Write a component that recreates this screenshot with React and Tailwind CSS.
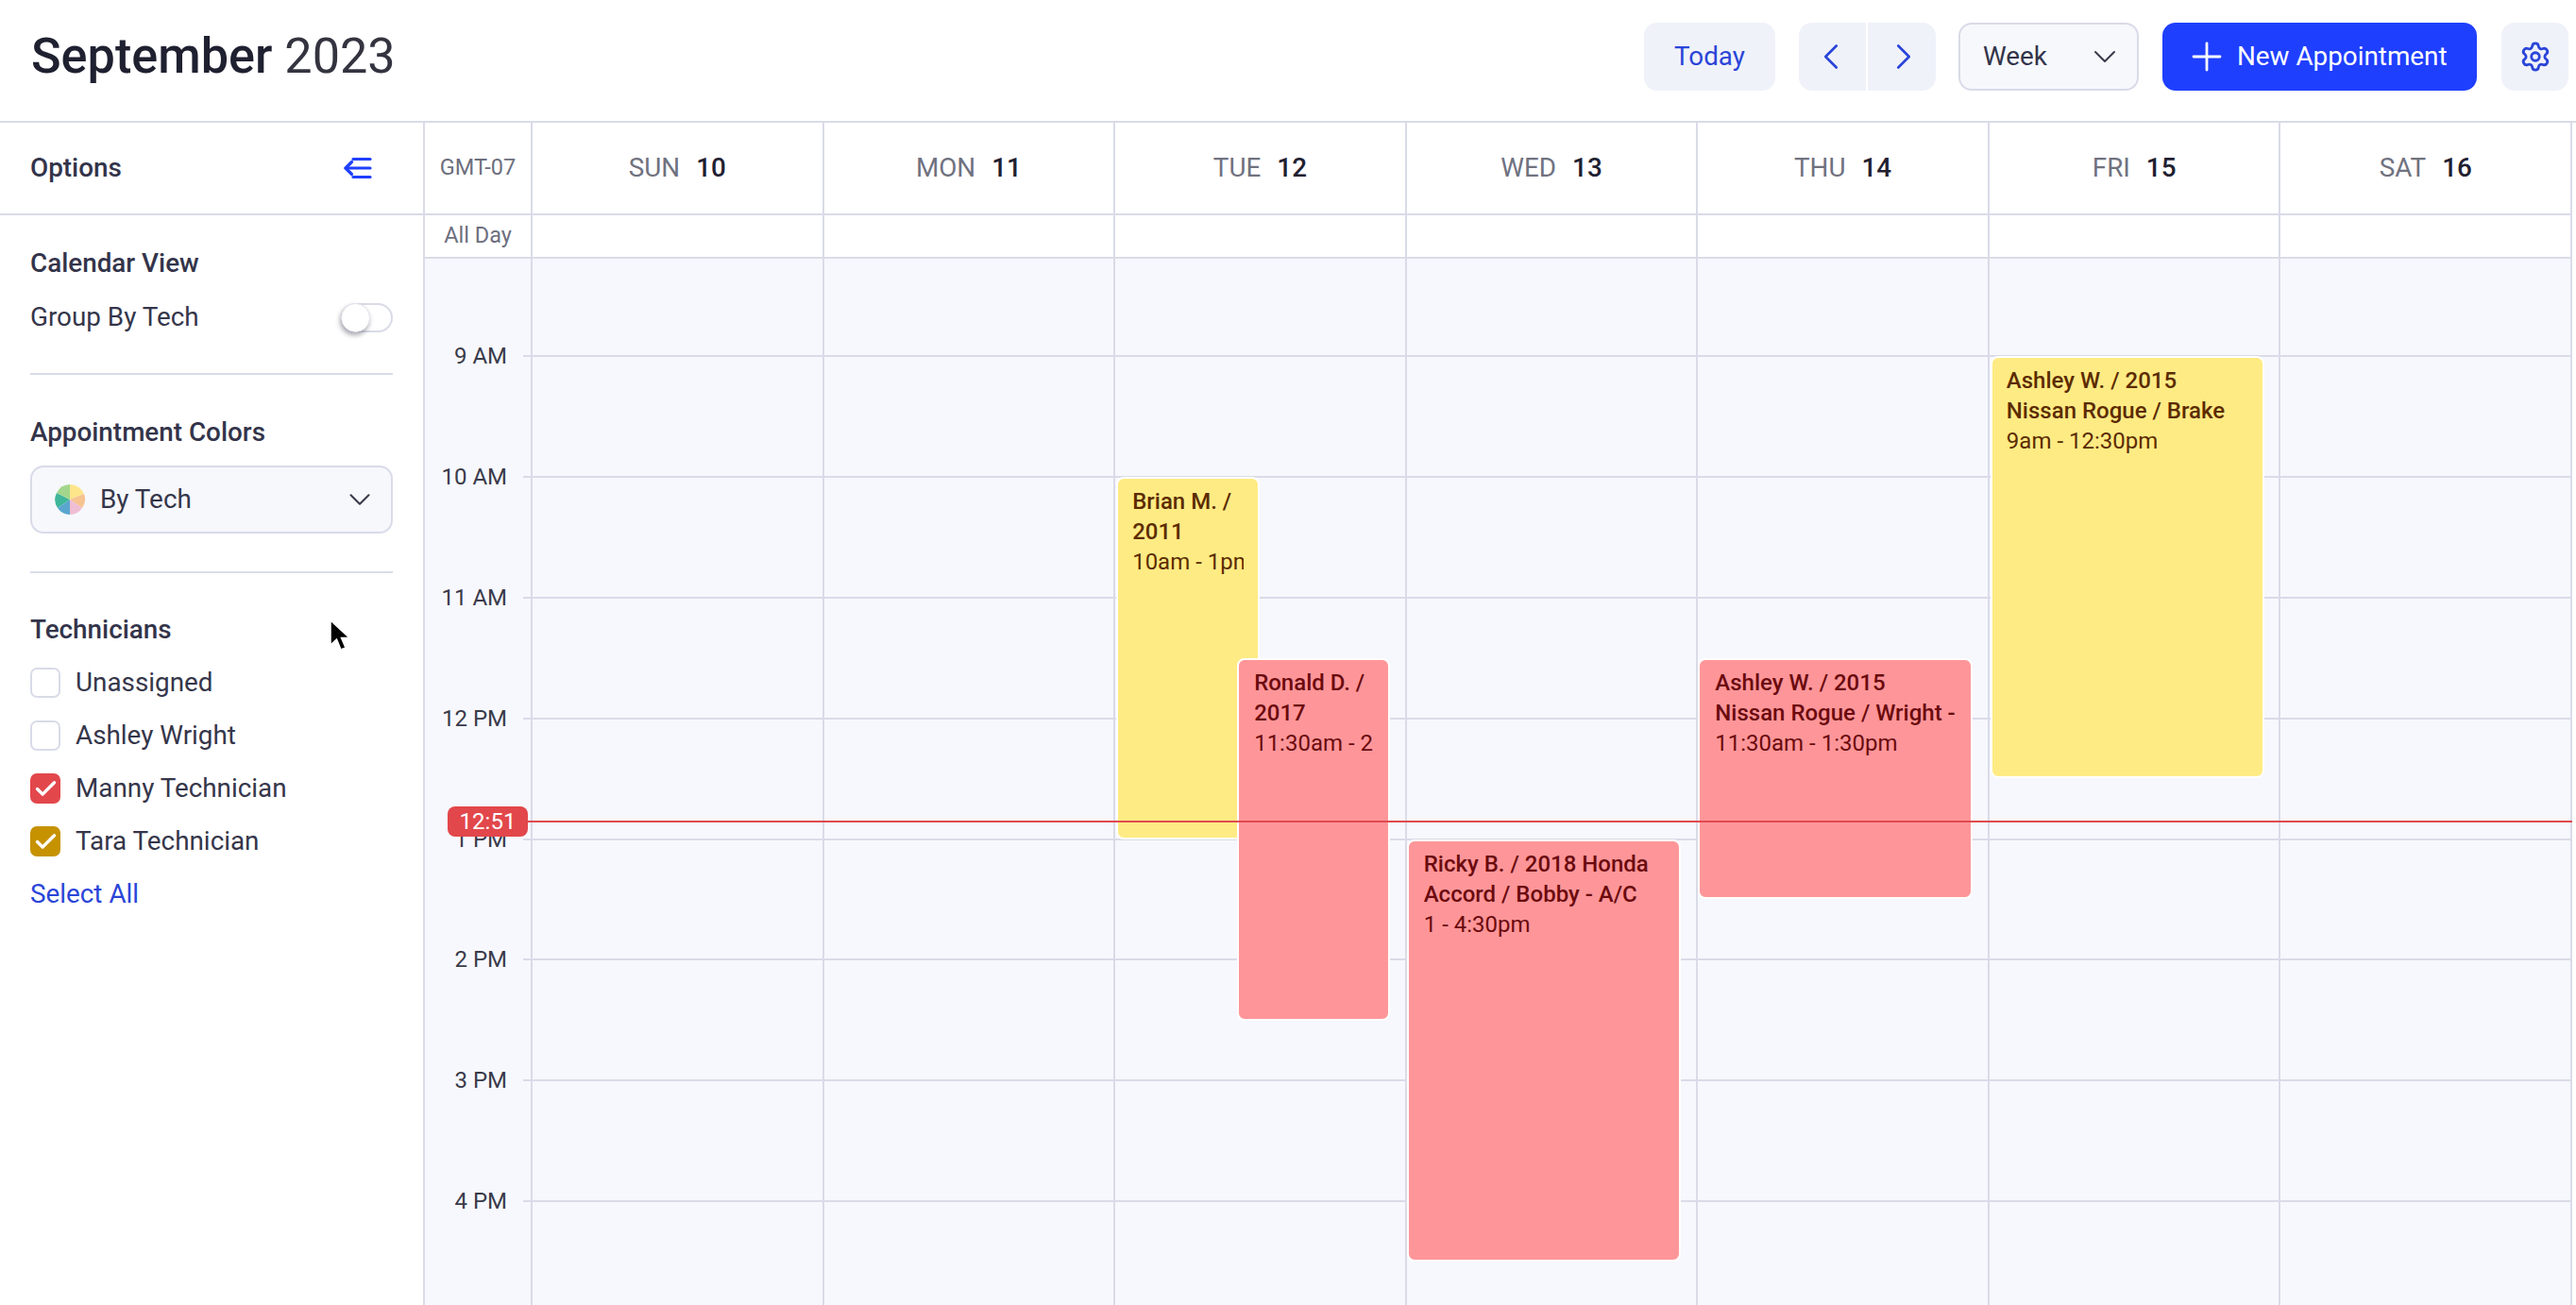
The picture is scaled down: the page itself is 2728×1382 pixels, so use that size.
import React from "react";
import { Settings, ChevronDown, ChevronLeft, ChevronRight, Plus, Check } from "lucide-react";

const days = [
  ["SUN", 10],
  ["MON", 11],
  ["TUE", 12],
  ["WED", 13],
  ["THU", 14],
  ["FRI", 15],
  ["SAT", 16],
];
const hours = ["9 AM", "10 AM", "11 AM", "12 PM", "1 PM", "2 PM", "3 PM", "4 PM"];

const eventsByDay = {
  2: [
    {
      title: ["Brian M. /", "2011"],
      time: "10am - 1pm",
      tone: "yellow",
      cls: "top-[231px] left-[1px] w-[152px] h-[384px]",
    },
    {
      title: ["Ronald D. /", "2017"],
      time: "11:30am - 2:30pm",
      tone: "red",
      cls: "top-[423px] left-[129px] w-[162px] h-[384px]",
    },
  ],
  3: [
    {
      title: ["Ricky B. / 2018 Honda", "Accord / Bobby - A/C"],
      time: "1 - 4:30pm",
      tone: "red",
      cls: "top-[615px] left-[0px] w-[290px] h-[447px]",
    },
  ],
  4: [
    {
      title: ["Ashley W. / 2015", "Nissan Rogue / Wright -"],
      time: "11:30am - 1:30pm",
      tone: "red",
      cls: "top-[423px] left-[0px] w-[291px] h-[255px]",
    },
  ],
  5: [
    {
      title: ["Ashley W. / 2015", "Nissan Rogue / Brake"],
      time: "9am - 12:30pm",
      tone: "yellow",
      cls: "top-[103px] left-[1px] w-[290px] h-[447px]",
    },
  ],
};

function EventCard({ e }) {
  const yellow = e.tone === "yellow";
  return (
    <div
      className={`absolute ${e.cls} rounded-[8px] border-2 border-white overflow-hidden py-[8px] text-[24px] leading-[32px] ${
        yellow ? "bg-[#ffeb84] text-[#5c2b00] px-[15px]" : "bg-[#fe9699] text-[#6b0a0e] px-[16px]"
      }`}
    >
      <div className="w-full h-full overflow-hidden">
        <div className="font-medium whitespace-nowrap">
          {e.title.map((t) => (
            <div key={t}>{t}</div>
          ))}
        </div>
        <div className="whitespace-nowrap">{e.time}</div>
      </div>
    </div>
  );
}

function TechRow({ label, color }) {
  return (
    <div className="flex items-center h-[56px] gap-[16px] text-[27.84px] text-[#35364a]">
      {color ? (
        <span className={`w-[32px] h-[32px] rounded-[7px] flex items-center justify-center ${color}`}>
          <Check size={27} strokeWidth={3} className="text-white" />
        </span>
      ) : (
        <span className="w-[32px] h-[32px] rounded-[7px] border-2 border-[#d9dbe8] bg-white" />
      )}
      <span>{label}</span>
    </div>
  );
}

export default function App() {
  return (
    <div className="w-full h-screen overflow-hidden bg-white flex flex-col font-['Roboto',sans-serif] text-[#33344a]">
      {/* Top bar */}
      <header className="h-[130px] shrink-0 border-b-2 border-[#d9dbe8] flex items-center pl-[33px] pr-[8px] pb-[8px]">
        <h1 className="text-[52.2px] leading-none text-[#1f2030]">
          <span className="font-medium">September</span>
          <span className="text-[#33343f]"> 2023</span>
        </h1>
        <div className="ml-auto flex items-center">
          <button className="w-[139px] h-[72px] rounded-[14px] bg-[#f0f2fa] text-[27.84px] text-[#2a45d8]">Today</button>
          <div className="ml-[25px] w-[145px] h-[72px] rounded-[14px] bg-[#f0f2fa] flex overflow-hidden text-[#2a45d8]">
            <button className="flex-1 flex items-center justify-center border-r-2 border-white pr-[2px]">
              <ChevronLeft size={46} strokeWidth={1.4} />
            </button>
            <button className="flex-1 flex items-center justify-center pl-[4px]">
              <ChevronRight size={46} strokeWidth={1.4} />
            </button>
          </div>
          <div className="ml-[24px] w-[191px] h-[72px] rounded-[14px] border-2 border-[#d9dbe8] bg-[#f6f8fc] flex items-center pl-[24px] pr-[14px] text-[27.84px] text-[#33344a]">
            <span>Week</span>
            <ChevronDown size={40} strokeWidth={1.2} className="ml-auto text-[#3a3b4a]" />
          </div>
          <button className="ml-[25px] w-[333px] h-[72px] rounded-[14px] bg-[#1f3fff] text-white text-[27.84px] flex items-center pl-[23px] gap-[8px]">
            <Plus size={48} strokeWidth={1.4} />
            New Appointment
          </button>
          <button className="ml-[26px] w-[71px] h-[72px] rounded-[14px] bg-[#f0f2fa] flex items-center justify-center text-[#2a45d8]">
            <Settings size={34} strokeWidth={2} />
          </button>
        </div>
      </header>

      <div className="flex flex-1 min-h-0">
        {/* Sidebar */}
        <aside className="w-[450px] shrink-0 border-r-2 border-[#d9dbe8] relative">
          <div className="h-[98px] border-b-2 border-[#d9dbe8] flex items-center justify-between pl-[32px] pr-[53px]">
            <span className="text-[27.84px] font-medium">Options</span>
            <svg width="32" height="24" viewBox="0 0 32 24" fill="none" stroke="#1f3fff" strokeWidth="3.2" strokeLinecap="round" strokeLinejoin="round">
              <path d="M11 2.5H29" />
              <path d="M3 12H29" />
              <path d="M11 21.5H29" />
              <path d="M9.5 5.5L3 12L9.5 18.5" />
            </svg>
          </div>
          <div className="px-[32px]">
            <div className="pt-[33px] pb-[41px] border-b-2 border-[#d9dbe8]">
              <div className="text-[27.84px] leading-[36px] font-medium">Calendar View</div>
              <div className="mt-[21px] flex items-center justify-between text-[27.84px] leading-[36px] text-[#35364a]">
                <span>Group By Tech</span>
                <span className="w-[55px] h-[31px] rounded-full border-2 border-[#d9dbe8] relative bg-white">
                  <span className="absolute -left-[2px] -top-[2px] w-[31px] h-[31px] rounded-full bg-white border border-[#e4e5ec] shadow-[-1px_3px_5px_rgba(40,40,60,0.4)]" />
                </span>
              </div>
            </div>
            <div className="pt-[43px] pb-[40px] border-b-2 border-[#d9dbe8]">
              <div className="text-[27.84px] leading-[36px] font-medium">Appointment Colors</div>
              <div className="mt-[17px] h-[72px] rounded-[14px] border-2 border-[#d9dbe8] bg-[#f6f8fc] flex items-center pl-[24px] pr-[14px] text-[27.84px] text-[#35364a]">
                <svg width="32" height="32" viewBox="0 0 32 32" className="mr-[16px]">
                  <path d="M16 16L16 0A16 16 0 0 1 31 10Z" fill="#fde58a" />
                  <path d="M16 16L31 10A16 16 0 0 1 29 25Z" fill="#f6c391" />
                  <path d="M16 16L29 25A16 16 0 0 1 16 32Z" fill="#efbdd4" />
                  <path d="M16 16L16 32A16 16 0 0 1 3 25Z" fill="#5ba6cf" />
                  <path d="M16 16L3 25A16 16 0 0 1 2 9Z" fill="#3fb69a" />
                  <path d="M16 16L2 9A16 16 0 0 1 16 0Z" fill="#a3d68c" />
                </svg>
                <span>By Tech</span>
                <ChevronDown size={38} strokeWidth={1.3} className="ml-auto text-[#3a3b4a]" />
              </div>
            </div>
            <div className="pt-[42px]">
              <div className="text-[27.84px] leading-[36px] font-medium">Technicians</div>
              <div className="mt-[10px]">
                <TechRow label="Unassigned" />
                <TechRow label="Ashley Wright" />
                <TechRow label="Manny Technician" color="bg-[#e2474b]" />
                <TechRow label="Tara Technician" color="bg-[#c69200]" />
              </div>
              <div className="mt-[10px] text-[27.84px] leading-[36px] text-[#2a45d8]">Select All</div>
            </div>
          </div>
          {/* mouse pointer */}
          <svg className="absolute left-[349px] top-[526px]" width="24" height="38" viewBox="0 0 24 38">
            <path d="M1 1V27L7.5 21L12 32L17 30L12.5 19.5H21Z" fill="#000" stroke="#fff" strokeWidth="1.5" />
          </svg>
        </aside>

        {/* Calendar */}
        <main className="flex-1 min-w-0 flex flex-col pr-[4px]">
          <div className="h-[98px] shrink-0 grid grid-cols-[114px_repeat(7,1fr)] border-b-2 border-[#d9dbe8]">
            <div className="border-r-2 border-[#d9dbe8] flex items-center justify-center text-[23.5px] text-[#6d6f7e]">GMT-07</div>
            {days.map(([d, n]) => (
              <div key={d} className="border-r-2 border-[#d9dbe8] flex items-center justify-center gap-[17px] text-[27.84px]">
                <span className="text-[#70727f]">{d}</span>
                <span className="font-medium text-[#1f2030]">{n}</span>
              </div>
            ))}
          </div>
          <div className="h-[46px] shrink-0 grid grid-cols-[114px_repeat(7,1fr)] border-b-2 border-[#d9dbe8]">
            <div className="border-r-2 border-[#d9dbe8] flex items-center justify-center text-[23.5px] text-[#6d6f7e]">All Day</div>
            {days.map(([d]) => (
              <div key={d} className="border-r-2 border-[#d9dbe8]" />
            ))}
          </div>

          <div className="flex-1 min-h-0 relative overflow-hidden bg-[#f7f8fd] grid grid-cols-[114px_repeat(7,1fr)]">
            <div className="border-r-2 border-[#d9dbe8] relative">
              <div className="h-[102px]" />
              {hours.map((h) => (
                <div key={h} className="h-[127.9px] relative">
                  <span className="absolute right-[-2px] top-0 w-[10px] h-[2px] bg-[#d9dbe8]" />
                  <span className="absolute right-[25px] -top-[15px] leading-[32px] text-[24px] text-[#3a3b4a] whitespace-nowrap">{h}</span>
                </div>
              ))}
            </div>
            {days.map(([d], i) => (
              <div key={d} className="border-r-2 border-[#d9dbe8] relative">
                <div className="h-[102px]" />
                {hours.map((h) => (
                  <div key={h} className="h-[127.9px] border-t-2 border-[#d9dbe8]" />
                ))}
                {(eventsByDay[i] || []).map((e) => (
                  <EventCard key={e.time} e={e} />
                ))}
              </div>
            ))}
            {/* now indicator */}
            <div className="absolute left-[109px] right-0 top-[595px] h-[2px] bg-[#e04a4f]" />
            <div className="absolute left-[24px] top-[580px] w-[85px] h-[32px] rounded-[8px] bg-[#e2474b] text-white text-[24px] leading-[32px] text-center">12:51</div>
          </div>
        </main>
      </div>
    </div>
  );
}
